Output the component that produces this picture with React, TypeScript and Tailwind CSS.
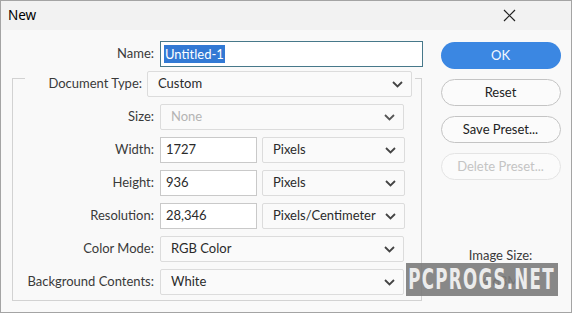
import React from 'react';

const font = { fontFamily: 'Lato, "Noto Sans", sans-serif' };

function Chevron({ dim }: { dim?: boolean }) {
  return (
    <svg width="11" height="7" viewBox="0 0 11 7" className="shrink-0">
      <polyline points="1,1 5.5,5.5 10,1" fill="none" stroke={dim ? '#555' : '#444'} strokeWidth="1.8" />
    </svg>
  );
}

function Select({ value, width, disabled }: { value: string; width: string; disabled?: boolean }) {
  return (
    <div
      className={`${width} h-[26px] flex items-center justify-between pl-[10px] pr-[8px] border border-[#dcdcdc] bg-[#fafafa] rounded-[2px] ${
        disabled ? 'text-[#b4b4b4]' : 'text-[#2a2a2a]'
      }`}
    >
      <span>{value}</span>
      <Chevron dim={disabled} />
    </div>
  );
}

function Field({ value, width }: { value: string; width: string }) {
  return (
    <div className={`${width} h-[26px] flex items-center pl-[5px] border border-[#c9c9c9] bg-white text-[#2a2a2a]`}>
      {value}
    </div>
  );
}

function Row({ label, children }: { label: string; children: React.ReactNode }) {
  return (
    <div className="flex items-center gap-[6px]">
      <div className="w-[141px] text-right text-[#3a3a3a]">{label}</div>
      {children}
    </div>
  );
}

function Button({ label, primary, disabled }: { label: string; primary?: boolean; disabled?: boolean }) {
  if (primary) {
    return (
      <div className="w-[120px] h-[27px] rounded-full bg-[#3b87e2] text-[#f4f8ff] flex items-center justify-center">
        {label}
      </div>
    );
  }
  return (
    <div
      className={`w-[120px] h-[27px] rounded-full border flex items-center justify-center bg-[#fbfbfb] ${
        disabled ? 'border-[#e4e4e4] text-[#c4c4c4]' : 'border-[#c4c4c4] text-[#222]'
      }`}
    >
      {label}
    </div>
  );
}

export default function App() {
  return (
    <div
      className="w-[572px] h-[313px] border border-[#a4a4a4] bg-[#f9f9f9] flex flex-col text-[13px] relative overflow-hidden"
      style={font}
    >
      <div className="h-[29px] bg-[#f2f2f2] flex items-center justify-between pl-[7px] pr-[55px] shrink-0">
        <span className="text-[13.5px] text-black" style={{ fontFamily: '"Noto Sans", sans-serif' }}>
          New
        </span>
        <svg width="13" height="13" viewBox="0 0 13 13">
          <path d="M1 1 L12 12 M12 1 L1 12" stroke="#222" strokeWidth="1.2" />
        </svg>
      </div>

      <div className="flex flex-1">
        <div className="w-[430px] flex flex-col pt-[11px]">
          <div className="flex items-center gap-[6px]">
            <div className="w-[153px] text-right text-[#3a3a3a]">Name:</div>
            <div className="w-[263px] h-[26px] flex items-center pl-[3px] border border-[#47788a] bg-white">
              <span className="bg-[#3279d4] text-white px-[1px] leading-[18px]">Untitled-1</span>
            </div>
          </div>

          <div className="ml-[11px] mt-[11px] w-[410px] border border-[#d2d2d2] pb-[5px] flex flex-col gap-[7px]">
            <div className="-mt-[8px] ml-[12px] w-[390px] bg-[#f9f9f9] flex items-center gap-[5px] pr-[3px]">
              <div className="w-[117px] text-right text-[#3a3a3a]">Document Type:</div>
              <Select value="Custom" width="w-[265px]" />
            </div>
            <Row label="Size:">
              <Select value="None" width="w-[244px]" disabled />
            </Row>
            <Row label="Width:">
              <Field value="1727" width="w-[97px]" />
              <Select value="Pixels" width="w-[143px] -ml-px" />
            </Row>
            <Row label="Height:">
              <Field value="936" width="w-[97px]" />
              <Select value="Pixels" width="w-[143px] -ml-px" />
            </Row>
            <Row label="Resolution:">
              <Field value="28,346" width="w-[97px]" />
              <Select value="Pixels/Centimeter" width="w-[143px] -ml-px" />
            </Row>
            <Row label="Color Mode:">
              <Select value="RGB Color" width="w-[244px]" />
            </Row>
            <Row label="Background Contents:">
              <Select value="White" width="w-[244px]" />
            </Row>
          </div>
        </div>

        <div className="flex flex-col items-center pl-[9px] pt-[12px] w-[130px]">
          <div className="flex flex-col gap-[10px]">
            <Button label="OK" primary />
            <Button label="Reset" />
            <Button label="Save Preset..." />
            <Button label="Delete Preset..." disabled />
          </div>
          <div className="mt-[66px] text-[#3a3a3a] text-center leading-[18px]">Image Size:</div>
          <div className="mt-[8px] text-[#3a3a3a] text-center leading-[18px]">4,63M</div>
        </div>
      </div>

      {/* watermark over the image-size block */}
      <div
        className="absolute left-[405px] top-[262px] w-[152px] h-[33px] bg-[#7b7b7b]/90 flex items-center justify-center text-[#ececec] text-[29px] font-bold tracking-[2px]"
        style={{ fontFamily: '"DejaVu Sans Condensed", "DejaVu Sans", sans-serif' }}
      >
        <span className="inline-block scale-x-[0.64] whitespace-nowrap">PCPROGS.NET</span>
      </div>
    </div>
  );
}
